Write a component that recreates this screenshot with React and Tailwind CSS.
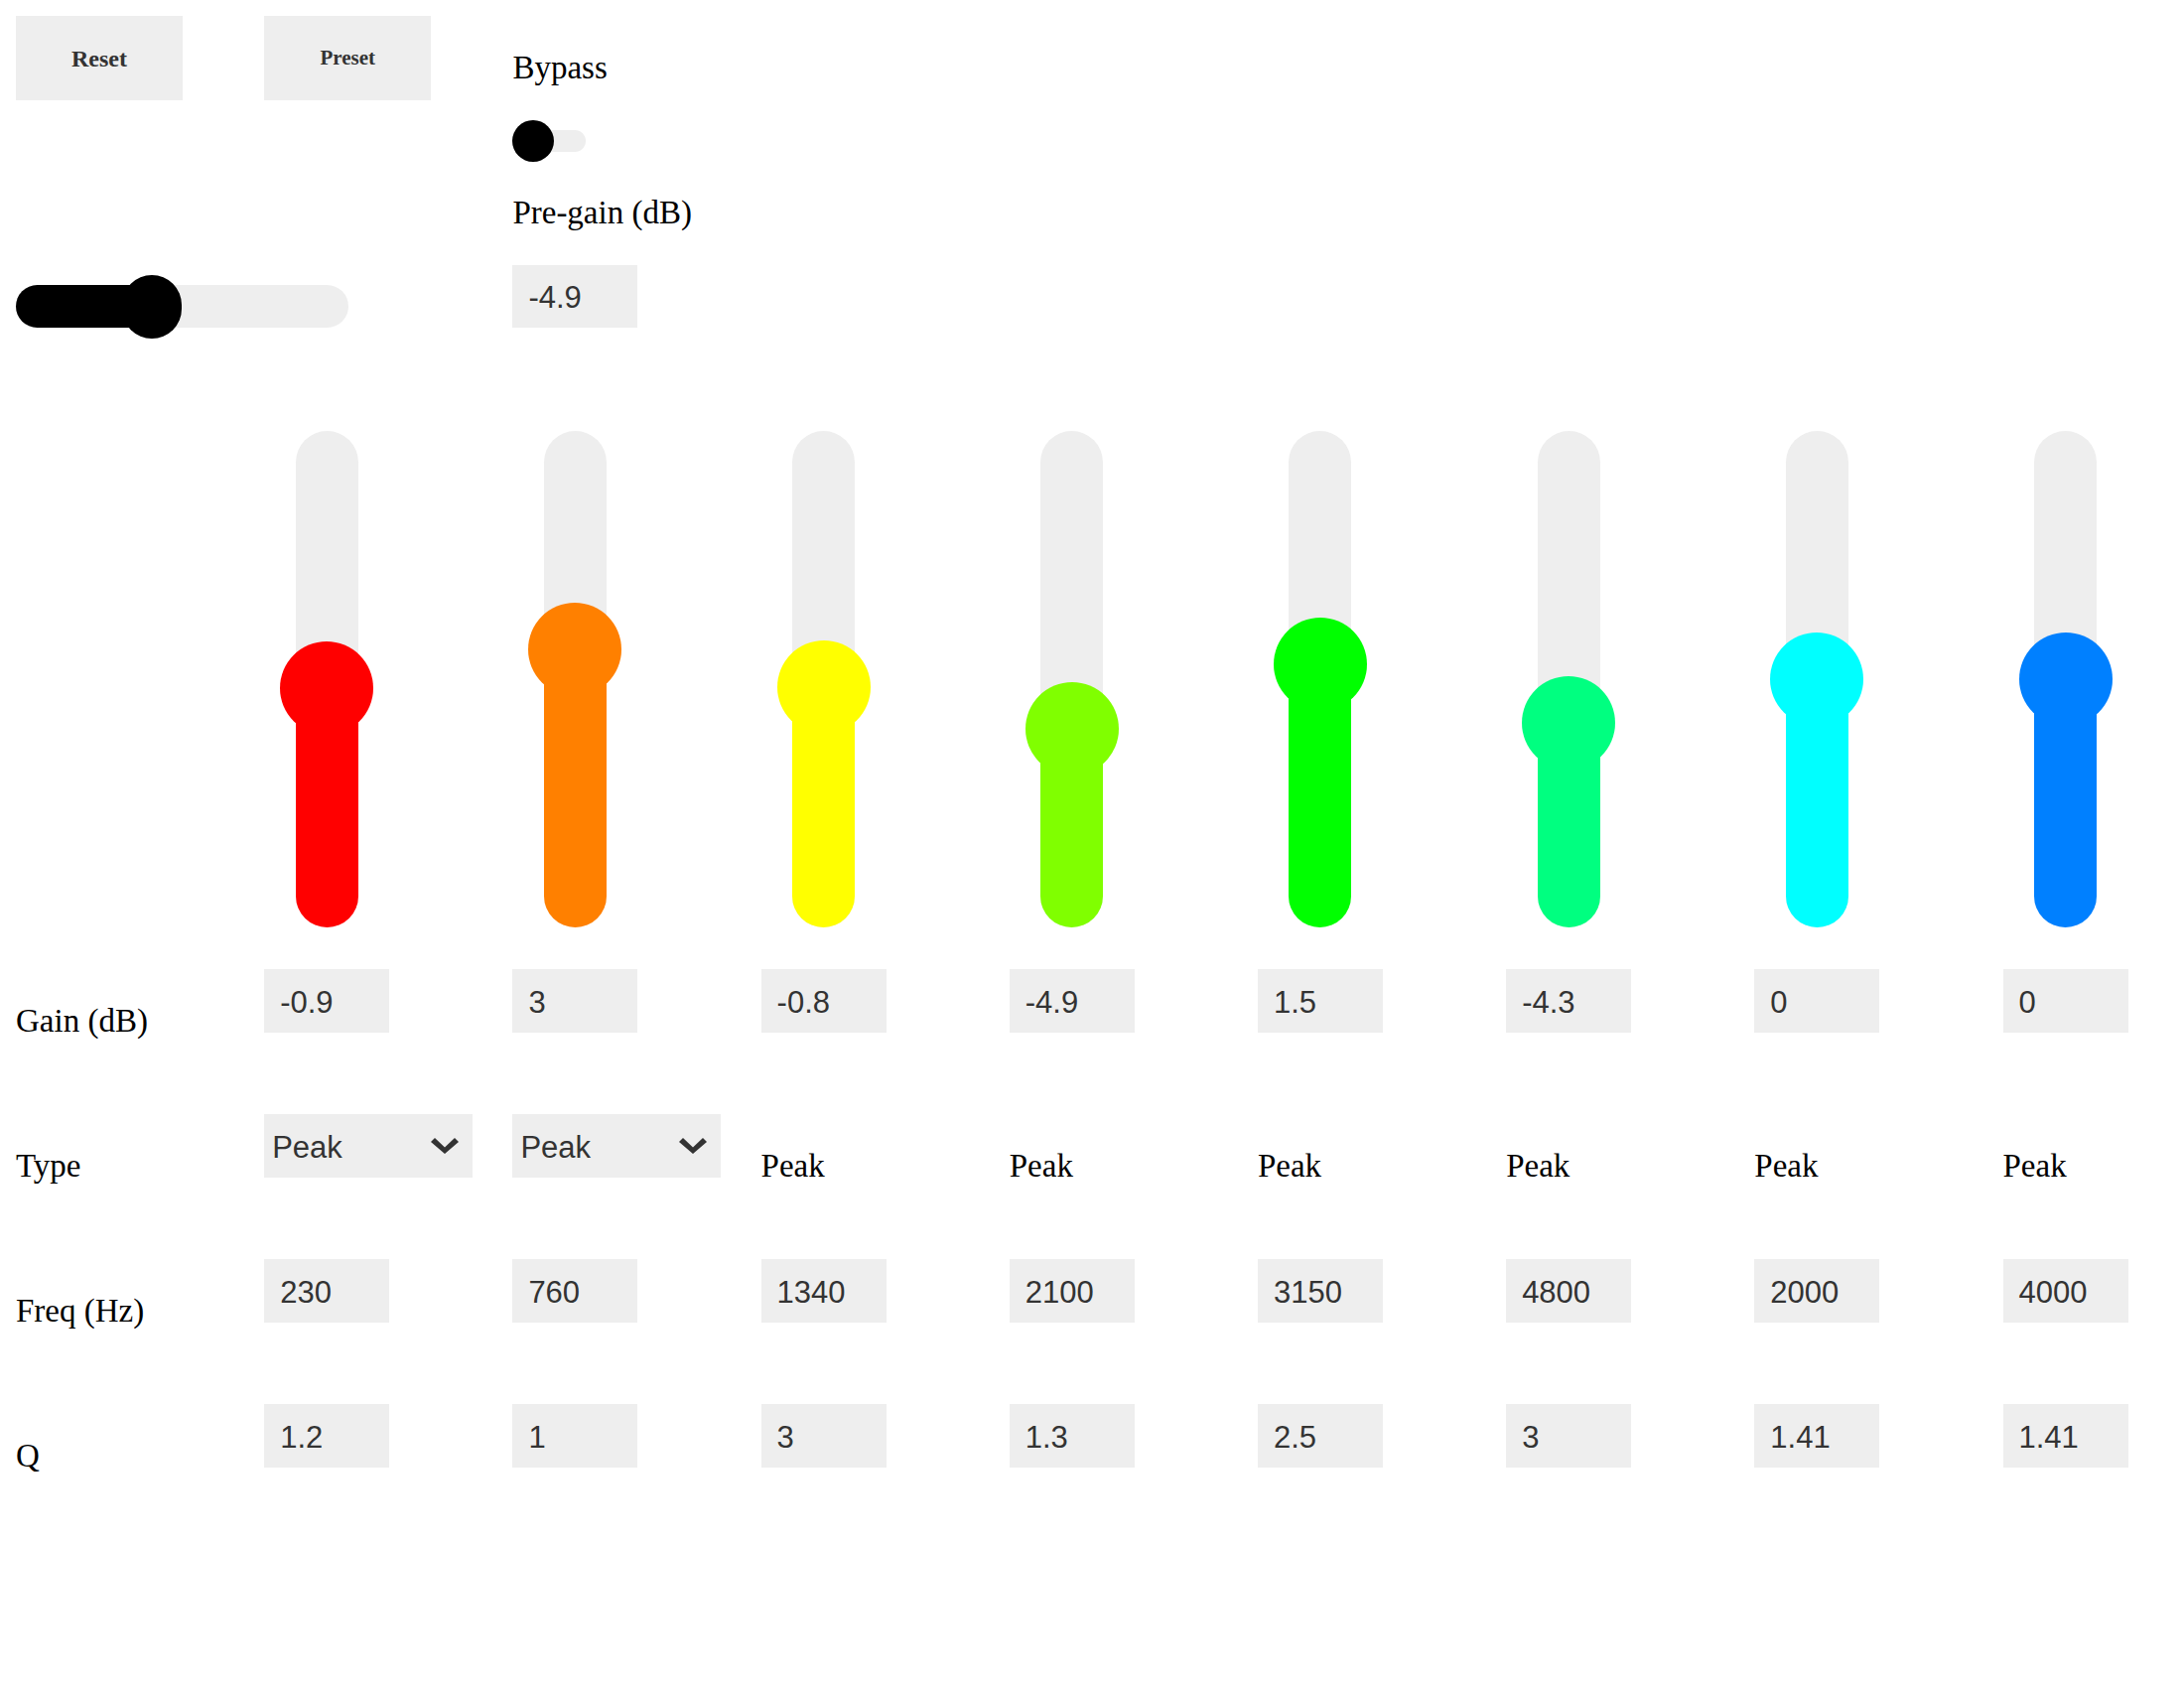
import { useState } from 'react';

const serif = { fontFamily: '"Liberation Serif", "Times New Roman", serif' };
const sans = { fontFamily: '"Liberation Sans", Arial, sans-serif' };

const BANDS = [
  { color: '#ff0000', gain: -0.9, type: 'select', freq: 230, q: 1.2 },
  { color: '#ff8000', gain: 3, type: 'select', freq: 760, q: 1 },
  { color: '#ffff00', gain: -0.8, type: 'text', freq: 1340, q: 3 },
  { color: '#80ff00', gain: -4.9, type: 'text', freq: 2100, q: 1.3 },
  { color: '#00ff00', gain: 1.5, type: 'text', freq: 3150, q: 2.5 },
  { color: '#00ff80', gain: -4.3, type: 'text', freq: 4800, q: 3 },
  { color: '#00ffff', gain: 0, type: 'text', freq: 2000, q: 1.41 },
  { color: '#0080ff', gain: 0, type: 'text', freq: 4000, q: 1.41 },
];

const TRACK_H = 500;
const KNOB = 94;

const ValueBox = ({ value, className = '' }) => (
  <div
    className={`flex h-[64px] w-[126px] items-center bg-[#eeeeee] pl-[16px] pt-[4px] text-[31px] text-[#333333] ${className}`}
    style={sans}
  >
    {value}
  </div>
);

const RowLabel = ({ children }) => (
  <div className="self-end text-[33px] leading-[24px] text-black" style={serif}>
    {children}
  </div>
);

const Chevron = () => (
  <svg width="28" height="16" viewBox="0 0 28 16" className="shrink-0">
    <polygon points="0,4 4,0 14,9.5 24,0 28,4 14,16" fill="#333333" />
  </svg>
);

const TypeSelect = () => (
  <div
    className="flex h-[64px] w-[210px] items-center justify-between bg-[#eeeeee] pl-[8px] pr-[14px] text-[31px] text-[#333333]"
    style={sans}
  >
    <span className="pt-[4px]">Peak</span>
    <Chevron />
  </div>
);

const VerticalSlider = ({ color, gain }) => {
  // thumb travels inside the track, +-20 dB
  const center = TRACK_H / 2 - gain * 10.15;
  return (
    <div className="flex w-[126px] justify-center">
      <div className="relative h-[500px] w-[63px] rounded-full bg-[#eeeeee]">
        <div
          className="absolute bottom-0 left-0 right-0 rounded-b-full"
          style={{ height: TRACK_H - center, backgroundColor: color }}
        />
        <div
          className="absolute left-1/2 h-[94px] w-[94px] -translate-x-1/2 rounded-full"
          style={{ top: center - KNOB / 2, backgroundColor: color }}
        />
      </div>
    </div>
  );
};

const App = () => {
  const [bypass, setBypass] = useState(false);

  return (
    <div className="min-h-[1700px] bg-white pl-[16px] pt-[16px]">
      {/* top controls */}
      <div className="flex">
        <div className="flex h-[314px] w-[500.4px] flex-col justify-between">
          <div className="grid grid-cols-2">
            <button
              className="h-[85px] w-[168px] bg-[#eeeeee] text-[24px] font-bold text-[#333333]"
              style={serif}
            >
              Reset
            </button>
            <button
              className="h-[85px] w-[168px] bg-[#eeeeee] text-[21px] font-bold text-[#333333]"
              style={serif}
            >
              Preset
            </button>
          </div>
          <div className="relative h-[43px] w-[335px] rounded-full bg-[#eeeeee]">
            <div className="absolute bottom-0 left-0 top-0 w-[137px] rounded-l-full bg-black" />
            <div className="absolute left-[107px] top-[-10px] h-[64px] w-[60px] rounded-full bg-black" />
          </div>
        </div>

        <div className="flex flex-col">
          <div className="mt-[32px] text-[33px] leading-[40px] text-black" style={serif}>
            Bypass
          </div>
          <button
            onClick={() => setBypass(!bypass)}
            className="relative mt-[33px] h-[42px] w-[74px]"
          >
            <span className="absolute left-0 right-0 top-[10px] h-[22px] rounded-full bg-[#eeeeee]" />
            <span
              className={`absolute top-0 h-[42px] w-[42px] rounded-full bg-black ${bypass ? 'left-[32px]' : 'left-0'}`}
            />
          </button>
          <div className="mt-[31px] text-[33px] leading-[40px] text-black" style={serif}>
            Pre-gain (dB)
          </div>
          <ValueBox value="-4.9" className="mt-[33px] !h-[63px]" />
        </div>
      </div>

      {/* band sliders */}
      <div className="mt-[104px] grid grid-cols-[repeat(8,250.2px)_1fr]">
        <div />
        {BANDS.map((b, i) => (
          <VerticalSlider key={i} color={b.color} gain={b.gain} />
        ))}
      </div>

      {/* band parameters */}
      <div className="mt-[42px] grid grid-cols-[repeat(8,250.2px)_1fr] gap-y-[82px]">
        <RowLabel>Gain (dB)</RowLabel>
        {BANDS.map((b, i) => (
          <ValueBox key={i} value={b.gain} />
        ))}

        <RowLabel>Type</RowLabel>
        {BANDS.map((b, i) =>
          b.type === 'select' ? (
            <TypeSelect key={i} />
          ) : (
            <RowLabel key={i}>Peak</RowLabel>
          )
        )}

        <RowLabel>Freq (Hz)</RowLabel>
        {BANDS.map((b, i) => (
          <ValueBox key={i} value={b.freq} />
        ))}

        <RowLabel>Q</RowLabel>
        {BANDS.map((b, i) => (
          <ValueBox key={i} value={b.q} />
        ))}
      </div>
    </div>
  );
};

export default App;
